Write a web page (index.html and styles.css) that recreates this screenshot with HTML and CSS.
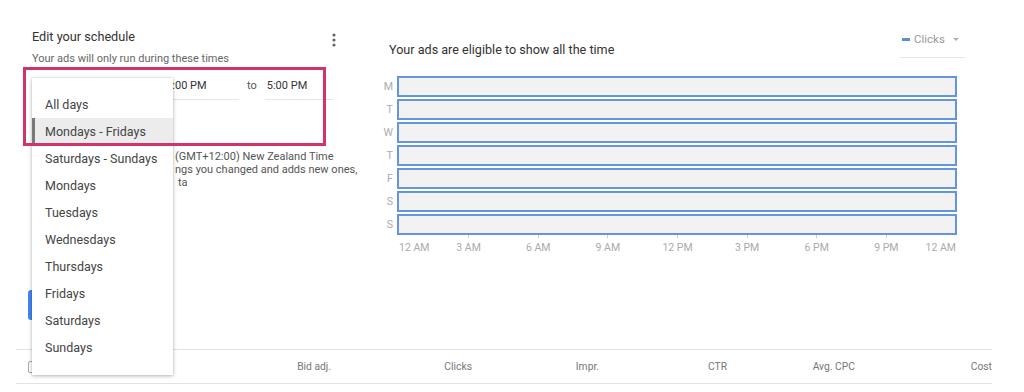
FILE: index.html
```html
<!DOCTYPE html>
<html lang="en">
<head>
    <meta charset="UTF-8">
    <meta name="viewport" content="width=device-width, initial-scale=1.0">
    <title>Ad schedule</title>
    <link rel="stylesheet" href="styles.css">
</head>
<body>

<div class="page">
    <div class="editor">
        <section class="schedule">
            <div class="schedule-head">
                <h2>Edit your schedule</h2>
                <svg class="kebab" width="4" height="14" viewBox="0 0 4 14">
                    <circle cx="2" cy="2" r="1.6"/>
                    <circle cx="2" cy="7" r="1.6"/>
                    <circle cx="2" cy="12" r="1.6"/>
                </svg>
            </div>
            <p class="hint">Your ads will only run during these times</p>

            <div class="time-row">
                <div class="field day-field"></div>
                <div class="field from-field">12:00 PM</div>
                <span class="to">to</span>
                <div class="field to-field">5:00 PM</div>
            </div>

            <!-- start of each line sits under the open menu -->
            <div class="note">
                <div class="note-line">(GMT+12:00) New Zealand Time</div>
                <div class="note-line">ngs you changed and adds new ones,</div>
                <div class="note-line tail">ta</div>
            </div>

            <button class="btn" aria-label="Save"></button>

            <!-- open day picker -->
            <ul class="menu">
                <li>All days</li>
                <li class="selected">Mondays - Fridays</li>
                <li>Saturdays - Sundays</li>
                <li>Mondays</li>
                <li>Tuesdays</li>
                <li>Wednesdays</li>
                <li>Thursdays</li>
                <li>Fridays</li>
                <li>Saturdays</li>
                <li>Sundays</li>
            </ul>
            <div class="highlight"></div>
        </section>

        <section class="chart">
            <div class="chart-head">
                <h3>Your ads are eligible to show all the time</h3>
                <div class="metric"><span class="swatch"></span>Clicks<span class="caret"></span></div>
            </div>

            <div class="week">
                <span class="day">M</span><div class="slot"></div>
                <span class="day">T</span><div class="slot"></div>
                <span class="day">W</span><div class="slot"></div>
                <span class="day">T</span><div class="slot"></div>
                <span class="day">F</span><div class="slot"></div>
                <span class="day">S</span><div class="slot"></div>
                <span class="day">S</span><div class="slot"></div>
            </div>

            <div class="axis">
                <span class="hour first">12 AM</span>
                <span class="hour">3 AM</span>
                <span class="hour">6 AM</span>
                <span class="hour">9 AM</span>
                <span class="hour">12 PM</span>
                <span class="hour">3 PM</span>
                <span class="hour">6 PM</span>
                <span class="hour">9 PM</span>
                <span class="hour last">12 AM</span>
            </div>
        </section>
    </div>

    <div class="table-head">
        <div class="cell check-cell"><span class="checkbox"></span></div>
        <div class="cell"></div>
        <div class="cell">Bid adj.</div>
        <div class="cell">Clicks</div>
        <div class="cell">Impr.</div>
        <div class="cell">CTR</div>
        <div class="cell">Avg. CPC</div>
        <div class="cell">Cost</div>
    </div>
</div>

</body>
</html>
```

FILE: styles.css
```css
* {
    box-sizing: border-box;
    margin: 0;
    padding: 0;
}
body {
    font-family: Roboto, 'Liberation Sans', sans-serif;
    background: #fff;
    color: #333;
}
.page {
    padding: 29px 32px 0 16px;
}
.editor {
    display: flex;
    padding: 0 27px 0 16px;
}

/* left: schedule form */
.schedule {
    position: relative;
    width: 313px;
    flex-shrink: 0;
}
.schedule-head {
    display: flex;
    justify-content: space-between;
    align-items: flex-start;
}
.schedule-head h2 {
    font-size: 12.7px;
    font-weight: 400;
    line-height: 16px;
    color: #333;
}
.kebab {
    fill: #666;
    margin: 4px 9px 0 0;
}
.hint {
    margin-top: 5px;
    font-size: 11px;
    line-height: 14px;
    color: #666;
}
.time-row {
    display: flex;
    align-items: flex-start;
    margin-top: 12px;
}
.field {
    height: 22px;
    font-size: 11px;
    line-height: 16px;
    padding: 0 0 5px 2px;
    border-bottom: 1px solid #e6e6e6;
    color: #333;
    white-space: nowrap;
}
.day-field {
    width: 118px;
    margin-right: 8px;
}
.from-field {
    width: 81px;
}
.to-field {
    width: 68px;
}
.to {
    font-size: 11px;
    line-height: 16px;
    color: #555;
    margin: 0 8px;
}
.note {
    margin-top: 50px;
    padding-left: 143px;
    font-size: 11px;
    line-height: 13px;
    color: #555;
    white-space: nowrap;
}
.note-line.tail {
    padding-left: 3px;
}
.btn {
    display: block;
    margin: 101px 0 0 -4px;
    width: 72px;
    height: 30px;
    border: none;
    border-radius: 3px;
    background: #4285f4;
}

/* open dropdown */
.menu {
    position: absolute;
    left: 0;
    top: 49px;
    z-index: 2;
    width: 141px;
    height: 297px;
    padding-top: 13px;
    list-style: none;
    background: #fff;
    box-shadow: 0 1px 4px rgba(0, 0, 0, 0.28), 0 0 1px rgba(0, 0, 0, 0.2);
}
.menu li {
    height: 27px;
    line-height: 27px;
    padding-left: 13px;
    font-size: 12.5px;
    color: #444;
    white-space: nowrap;
}
.menu li.selected {
    background: #ececec;
    border-left: 3px solid #7a7a7a;
    padding-left: 10px;
}
.highlight {
    position: absolute;
    left: -9px;
    top: 38px;
    z-index: 3;
    width: 303px;
    height: 79px;
    border: 3px solid #d2336b;
}

/* right: chart */
.chart {
    flex: 1;
    margin-left: 36px;
}
.chart-head {
    display: flex;
    justify-content: space-between;
    align-items: flex-start;
}
.chart-head h3 {
    margin-top: 13px;
    padding-left: 8px;
    font-size: 12.6px;
    font-weight: 400;
    line-height: 16px;
    color: #333;
}
.metric {
    display: flex;
    align-items: center;
    margin-top: 2px;
    width: 65px;
    padding: 0 0 10px 2px;
    border-bottom: 1px solid #e6e6e6;
    font-size: 11.5px;
    line-height: 16px;
    color: #9a9a9a;
}
.swatch {
    width: 8px;
    height: 3px;
    margin-right: 4px;
    background: #5b8ddb;
}
.caret {
    margin-left: 8px;
    border-left: 3px solid transparent;
    border-right: 3px solid transparent;
    border-top: 3px solid #b0b0b0;
}
.week {
    display: grid;
    grid-template-columns: 16px 1fr;
    grid-auto-rows: 21px;
    row-gap: 2px;
    margin: 18px 8px 0 0;
}
.day {
    padding-right: 4px;
    text-align: right;
    font-size: 10.7px;
    line-height: 21px;
    color: #ababab;
}
.slot {
    background: #f2f2f2;
    border: 2px solid #6595dd;
}
.axis {
    display: flex;
    justify-content: space-between;
    margin: 0 8px 0 16px;
}
.hour {
    width: 0;
    display: flex;
    flex-direction: column;
    align-items: center;
    white-space: nowrap;
    font-size: 10.5px;
    line-height: 13px;
    color: #aaa;
}
.hour::before {
    content: '';
    width: 1px;
    height: 3px;
    margin-bottom: 3px;
    background: #cfcfcf;
}
.hour.first {
    align-items: flex-start;
    padding-left: 2px;
}
.hour.last {
    align-items: flex-end;
    padding-right: 1px;
}
.hour.first::before, .hour.last::before {
    visibility: hidden;
}

/* table header */
.table-head {
    display: grid;
    grid-template-columns: 40px 1fr 110px 141px 127px 128px 128px 137px;
    align-items: center;
    height: 35px;
    margin-top: 29px;
    border-top: 1px solid #e3e3e3;
    border-bottom: 1px solid #e3e3e3;
    font-size: 10.3px;
    color: #777;
}
.cell {
    text-align: right;
    white-space: nowrap;
}
.check-cell {
    padding-left: 12px;
    display: flex;
}
.checkbox {
    width: 12px;
    height: 12px;
    border: 1.5px solid #aaa;
    border-radius: 2px;
}
```
